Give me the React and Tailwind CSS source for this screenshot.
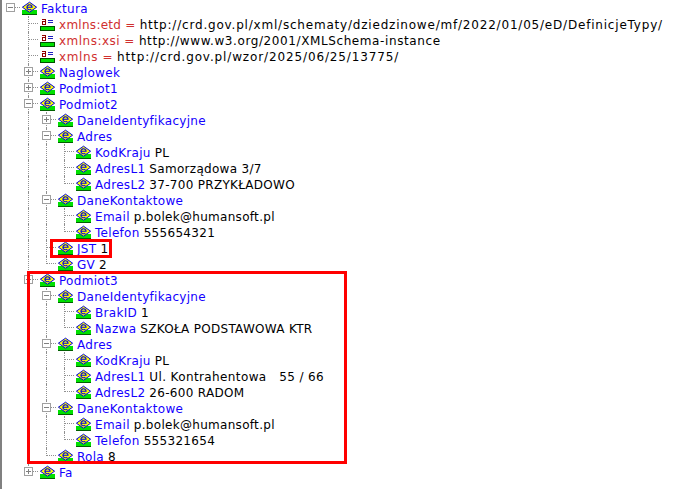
const F = "font-['DejaVu_Sans',sans-serif]";

const tree = {
  n: "Faktura", kids: [
    { n: "xmlns:etd =", a: 1, t: "tracking-[0.28px]", vt: "tracking-[0.8px]", v: "http://crd.gov.pl/xml/schematy/dziedzinowe/mf/2022/01/05/eD/DefinicjeTypy/" },
    { n: "xmlns:xsi =", a: 1, t: "tracking-[0.48px]", vt: "tracking-[0.6px]", v: "http://www.w3.org/2001/XMLSchema-instance" },
    { n: "xmlns =", a: 1, t: "tracking-[0.6px]", vt: "tracking-[0.87px]", v: "http://crd.gov.pl/wzor/2025/06/25/13775/" },
    { n: "Naglowek", closed: 1 },
    { n: "Podmiot1", closed: 1 },
    { n: "Podmiot2", kids: [
      { n: "DaneIdentyfikacyjne", closed: 1 },
      { n: "Adres", kids: [
        { n: "KodKraju", v: "PL" },
        { n: "AdresL1", v: "Samorządowa 3/7" },
        { n: "AdresL2", v: "37-700 PRZYKŁADOWO" },
      ] },
      { n: "DaneKontaktowe", kids: [
        { n: "Email", v: "p.bolek@humansoft.pl" },
        { n: "Telefon", v: "555654321" },
      ] },
      { n: "JST", v: "1" },
      { n: "GV", v: "2" },
    ] },
    { n: "Podmiot3", kids: [
      { n: "DaneIdentyfikacyjne", kids: [
        { n: "BrakID", v: "1" },
        { n: "Nazwa", v: "SZKOŁA PODSTAWOWA KTR" },
      ] },
      { n: "Adres", kids: [
        { n: "KodKraju", v: "PL" },
        { n: "AdresL1", vt: "tracking-[0.38px]", v: "Ul. Kontrahentowa   55 / 66" },
        { n: "AdresL2", v: "26-600 RADOM" },
      ] },
      { n: "DaneKontaktowe", kids: [
        { n: "Email", v: "p.bolek@humansoft.pl" },
        { n: "Telefon", v: "555321654" },
      ] },
      { n: "Rola", v: "8" },
    ] },
    { n: "Fa", closed: 1 },
  ],
};

function ElementIcon() {
  return (
    <svg width="15" height="14" viewBox="0 0 15 14" className="shrink-0">
      <path d="M0 9h15v5H0z" fill="#00e000" shapeRendering="crispEdges" />
      <path d="M0 13h15v1H0z" fill="#006000" shapeRendering="crispEdges" />
      <path d="M7.5 1.2L14.6 6.2L7.5 11.2L0.4 6.2Z" fill="#ffff00" stroke="#0000e0" strokeWidth="1" />
      <path d="M4.9 6.2h5.2a2.6 2.5 0 1 0-0.8 1.9" fill="none" stroke="#0000e0" strokeWidth="1.1" />
    </svg>
  );
}

function AttrIcon() {
  return (
    <svg width="15" height="14" viewBox="0 0 15 14" className="shrink-0">
      <path d="M0 9h15v5H0z" fill="#00e000" shapeRendering="crispEdges" />
      <path d="M0.5 9.5h14v4h-14z" fill="none" stroke="#005000" strokeWidth="1" shapeRendering="crispEdges" />
      <path d="M2 2.5h3.5v5M5.5 4.5h-3.5v3h3.5" fill="none" stroke="#900000" strokeWidth="1" shapeRendering="crispEdges" />
      <path d="M8 3.5h5M8 5.5h5" fill="none" stroke="#2020c0" strokeWidth="1" shapeRendering="crispEdges" />
    </svg>
  );
}

function Expander({ closed }) {
  return (
    <span className="absolute left-[4px] top-[3px] flex h-[9px] w-[9px] items-center justify-center border border-[#a0a0a0] bg-white">
      <span className="relative block h-px w-[5px] bg-[#808080]">
        {closed && <span className="absolute left-[2px] top-[-2px] block h-[5px] w-px bg-[#808080]" />}
      </span>
    </span>
  );
}

const lineV = "border-r border-dotted border-[#909090]";
const lineH = "border-b border-dotted border-[#909090]";

function Guide({ on }) {
  return (
    <div className="flex h-4 w-[18px] shrink-0">
      <div className={on ? `h-full w-[9px] ${lineV}` : "h-full w-[9px]"} />
    </div>
  );
}

function Connector({ last, hasTop, box, closed }) {
  return (
    <div className="relative flex h-4 w-[18px] shrink-0">
      {hasTop ? (
        <div className={last ? `h-[8px] w-[9px] ${lineV}` : `h-full w-[9px] ${lineV}`} />
      ) : (
        <div className="w-[9px]" />
      )}
      <div className={`h-[8px] flex-1 ${lineH}`} />
      {box && <Expander closed={closed} />}
    </div>
  );
}

function Node({ node, guides, last, root }) {
  const hasKids = node.kids && node.kids.length > 0;
  return (
    <>
      <div className="flex h-4 items-center">
        {guides.map((g, i) => <Guide key={i} on={g} />)}
        <Connector last={last} hasTop={!root} box={hasKids || node.closed} closed={node.closed} />
        <div className="ml-[2px] mr-[4px] flex h-4 items-center">
          {node.a ? <AttrIcon /> : <ElementIcon />}
        </div>
        <span className={`pt-[2px] ${node.t || "tracking-[0.3px]"} ${node.a ? "text-[#d03030]" : "text-[#1400ff]"}`}>{node.n}</span>
        {node.v && (
          <span className={`ml-[4px] pt-[2px] text-black ${node.vt || "tracking-[0.3px]"}`}>{node.v}</span>
        )}
      </div>
      {hasKids && node.kids.map((k, i) => (
        <Node key={i} node={k} guides={[...guides, !last]} last={i === node.kids.length - 1} />
      ))}
    </>
  );
}

export default function App() {
  return (
    <div className={`relative h-[489px] w-[673px] overflow-hidden bg-white text-[12px] leading-4 whitespace-pre ${F}`}>
      <div className="h-full border-l-2 border-[#808080]">
        <Node node={tree} guides={[]} root last />
      </div>
      <div className="absolute left-[50px] top-[239px] h-[19px] w-[62px] border-[3px] border-[#ff0000]" />
      <div className="absolute left-[27px] top-[271px] h-[193px] w-[320px] border-[3px] border-[#ff0000]" />
    </div>
  );
}
